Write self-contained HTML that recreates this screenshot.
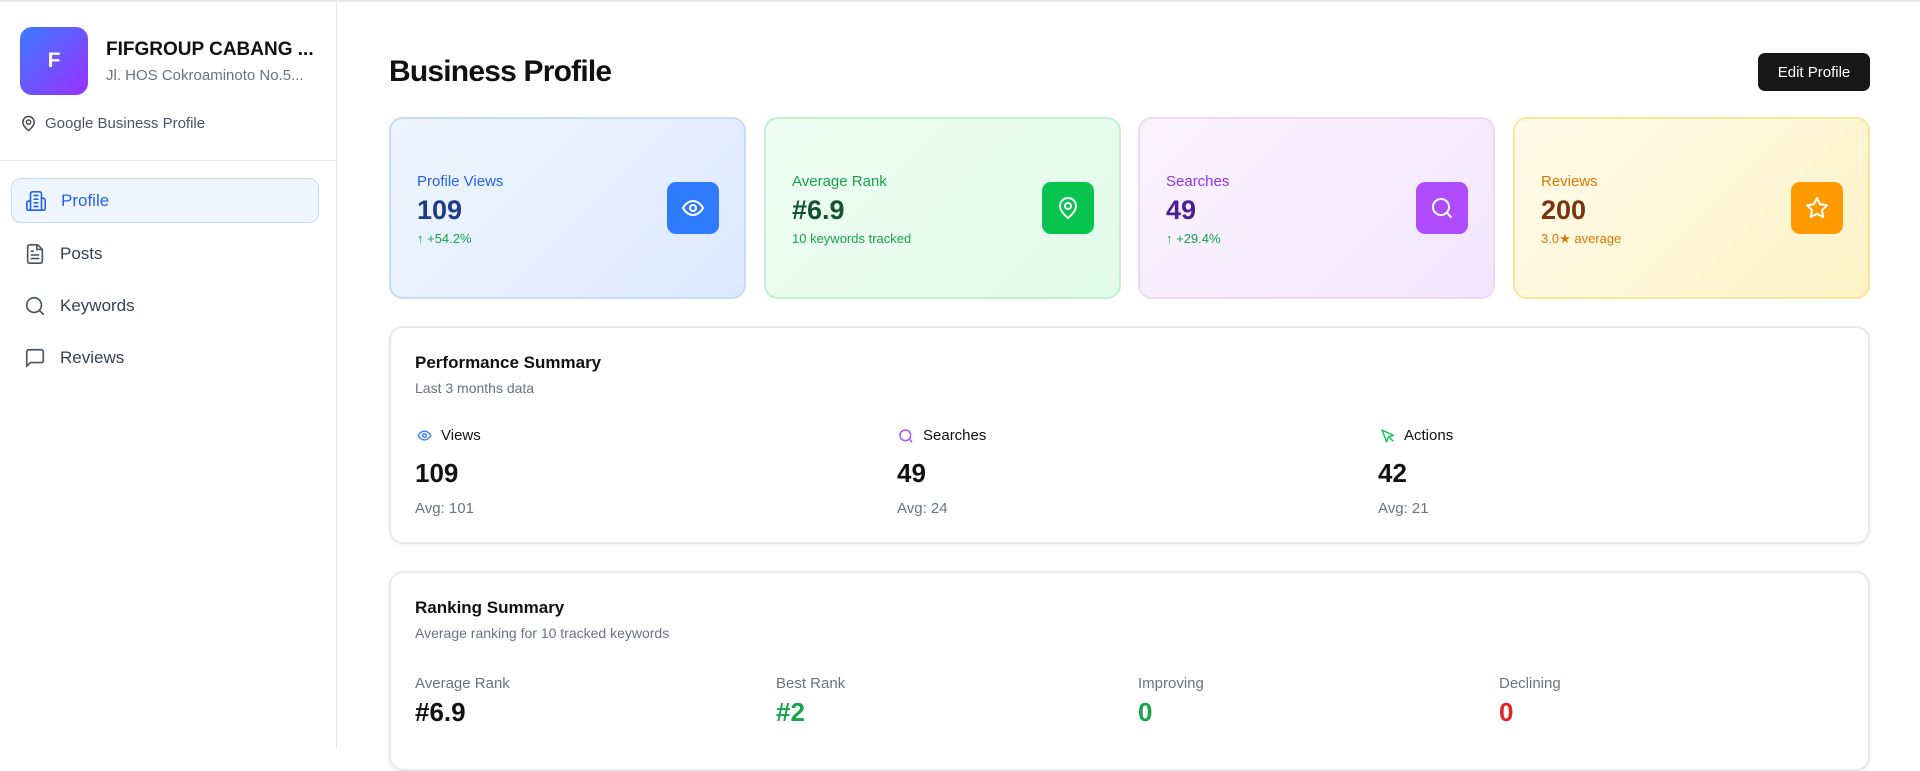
<!DOCTYPE html>
<html><head><meta charset="utf-8"><style>
*{box-sizing:border-box;margin:0;padding:0}
body{width:1920px;height:749px;overflow:hidden;background:#fff;font-family:"Liberation Sans",sans-serif;position:relative;color:#111}
.a{position:absolute;white-space:nowrap}
.side{position:absolute;left:0;top:0;width:337px;height:749px;border-right:1px solid #e5e7eb}
.top{position:absolute;left:0;top:0;width:1920px;height:2px;background:#e8e8e8}
.nav{position:absolute;left:11px;width:308px;height:45px;display:flex;align-items:center;padding-left:13px;font-size:17px;color:#374151}
.nav svg{width:22px;height:22px;margin-right:14px;fill:none;stroke:#4b5563;stroke-width:1.8;stroke-linecap:round;stroke-linejoin:round}
.card{position:absolute;top:117px;width:357px;height:182px;border-radius:14px;border:2px solid}
.card .l{position:absolute;left:26px;top:54px;font-size:15px}
.card .v{position:absolute;left:26px;top:76px;font-size:27px;font-weight:bold}
.card .s{position:absolute;left:26px;top:112px;font-size:13px}
.card .ic{position:absolute;left:276px;top:63px;width:52px;height:52px;border-radius:9px;display:flex;align-items:center;justify-content:center}
.card .ic svg{width:24px;height:24px;fill:none;stroke:#fff;stroke-width:2;stroke-linecap:round;stroke-linejoin:round}
.box{position:absolute;left:389px;width:1481px;border:2px solid #e8e8e8;border-radius:14px;box-shadow:0 2px 4px rgba(0,0,0,.05)}
.t{font-size:17px;font-weight:bold;color:#111}
.g{color:#6b7280}
</style></head><body>
<div class="top"></div>
<div class="side">
  <div class="a" style="left:20px;top:27px;width:68px;height:68px;border-radius:12px;background:linear-gradient(135deg,#3b7bff,#9b30ff);color:#fff;font-size:21px;font-weight:bold;display:flex;align-items:center;justify-content:center">F</div>
  <div class="a" style="left:106px;top:39px;font-size:19px;font-weight:bold;color:#111">FIFGROUP CABANG ...</div>
  <div class="a g" style="left:106px;top:67px;font-size:15px">Jl. HOS Cokroaminoto No.5...</div>
  <svg class="a" style="left:20px;top:115px" width="17" height="17" viewBox="0 0 24 24" fill="none" stroke="#374151" stroke-width="2"><path d="M20 10c0 6-8 12-8 12s-8-6-8-12a8 8 0 0 1 16 0z"/><circle cx="12" cy="10" r="3"/></svg>
  <div class="a" style="left:45px;top:115px;font-size:15px;color:#4b5563">Google Business Profile</div>
  <div class="a" style="left:0;top:160px;width:337px;height:1px;background:#e5e7eb"></div>
  <div class="nav" style="top:178px;background:#eff6ff;border:1.5px solid #bfdbfe;border-radius:10px;color:#2563eb"><svg style="stroke:#2563eb" viewBox="0 0 24 24"><path d="M6 22V4a2 2 0 0 1 2-2h8a2 2 0 0 1 2 2v18z"/><path d="M6 12H4a2 2 0 0 0-2 2v6a2 2 0 0 0 2 2h2M18 9h2a2 2 0 0 1 2 2v9a2 2 0 0 1-2 2h-2M10 6h4M10 10h4M10 14h4M10 18h4"/></svg>Profile</div>
  <div class="nav" style="top:231px"><svg viewBox="0 0 24 24"><path d="M15 2H6a2 2 0 0 0-2 2v16a2 2 0 0 0 2 2h12a2 2 0 0 0 2-2V7z"/><path d="M14 2v5h5M16 13H8M16 17H8M10 9H8"/></svg>Posts</div>
  <div class="nav" style="top:283px"><svg viewBox="0 0 24 24"><circle cx="11" cy="11" r="8"/><path d="m21 21-4.3-4.3"/></svg>Keywords</div>
  <div class="nav" style="top:335px"><svg viewBox="0 0 24 24"><path d="M21 15a2 2 0 0 1-2 2H7l-4 4V5a2 2 0 0 1 2-2h14a2 2 0 0 1 2 2z"/></svg>Reviews</div>
</div>

<div class="a" style="left:389px;top:55px;font-size:30px;font-weight:bold;letter-spacing:-0.8px">Business Profile</div>
<div class="a" style="left:1758px;top:53px;width:112px;height:38px;background:#171717;border-radius:7px;color:#fff;font-size:15px;display:flex;align-items:center;justify-content:center">Edit Profile</div>

<div class="card" style="left:389px;border-color:#c7dcfb;background:linear-gradient(135deg,#eef5ff,#dde9fd)">
  <div class="l" style="color:#2563eb">Profile Views</div><div class="v" style="color:#1e3a8a">109</div><div class="s" style="color:#16a34a">↑ +54.2%</div>
  <div class="ic" style="background:#2f7bff"><svg viewBox="0 0 24 24"><path d="M2 12s3.5-7 10-7 10 7 10 7-3.5 7-10 7S2 12 2 12z"/><circle cx="12" cy="12" r="3"/></svg></div></div>
<div class="card" style="left:764px;border-color:#bff0cf;background:linear-gradient(135deg,#effdf4,#e2fbe9)">
  <div class="l" style="color:#16a34a">Average Rank</div><div class="v" style="color:#14532d">#6.9</div><div class="s" style="color:#16a34a">10 keywords tracked</div>
  <div class="ic" style="background:#06c44e"><svg viewBox="0 0 24 24"><path d="M20 10c0 6-8 12-8 12s-8-6-8-12a8 8 0 0 1 16 0z"/><circle cx="12" cy="10" r="3"/></svg></div></div>
<div class="card" style="left:1138px;border-color:#ead7fd;background:linear-gradient(135deg,#faf3ff,#f1e6fe)">
  <div class="l" style="color:#9333ea">Searches</div><div class="v" style="color:#4c1d95">49</div><div class="s" style="color:#16a34a">↑ +29.4%</div>
  <div class="ic" style="background:#b04cff"><svg viewBox="0 0 24 24"><circle cx="11" cy="11" r="8"/><path d="m21 21-4.3-4.3"/></svg></div></div>
<div class="card" style="left:1513px;border-color:#fbe49a;background:linear-gradient(135deg,#fffbea,#fef3c7)">
  <div class="l" style="color:#d97706">Reviews</div><div class="v" style="color:#78350f">200</div><div class="s" style="color:#d97706">3.0★ average</div>
  <div class="ic" style="background:#fe9a00"><svg viewBox="0 0 24 24"><path d="M12 2l3.1 6.3 6.9 1-5 4.9 1.2 6.8L12 17.8 5.8 21l1.2-6.8-5-4.9 6.9-1z"/></svg></div></div>

<div class="box" style="top:326px;height:218px">
  <div class="a t" style="left:24px;top:25px">Performance Summary</div>
  <div class="a g" style="left:24px;top:52px;font-size:14px">Last 3 months data</div>
  <svg class="a" style="left:26px;top:100px" width="15" height="15" viewBox="0 0 24 24" fill="none" stroke="#2f7bff" stroke-width="2.2"><path d="M2 12s3.5-7 10-7 10 7 10 7-3.5 7-10 7S2 12 2 12z"/><circle cx="12" cy="12" r="3"/></svg>
  <div class="a" style="left:50px;top:99px;font-size:15px">Views</div>
  <div class="a" style="left:24px;top:130px;font-size:26px;font-weight:bold">109</div>
  <div class="a g" style="left:24px;top:172px;font-size:15px">Avg: 101</div>
  <svg class="a" style="left:507px;top:100px" width="16" height="16" viewBox="0 0 24 24" fill="none" stroke="#b04cff" stroke-width="2.2"><circle cx="11" cy="11" r="8"/><path d="m21 21-4.3-4.3"/></svg>
  <div class="a" style="left:532px;top:99px;font-size:15px">Searches</div>
  <div class="a" style="left:506px;top:130px;font-size:26px;font-weight:bold">49</div>
  <div class="a g" style="left:506px;top:172px;font-size:15px">Avg: 24</div>
  <svg class="a" style="left:989px;top:100px" width="16" height="16" viewBox="0 0 24 24" fill="none" stroke="#16c45a" stroke-width="2.2" stroke-linejoin="round"><path d="M3 3l7 18 2.5-7.5L20 11z"/><path d="M13 13l7 7"/></svg>
  <div class="a" style="left:1013px;top:99px;font-size:15px">Actions</div>
  <div class="a" style="left:987px;top:130px;font-size:26px;font-weight:bold">42</div>
  <div class="a g" style="left:987px;top:172px;font-size:15px">Avg: 21</div>
</div>

<div class="box" style="top:571px;height:200px">
  <div class="a t" style="left:24px;top:25px">Ranking Summary</div>
  <div class="a g" style="left:24px;top:52px;font-size:14px">Average ranking for 10 tracked keywords</div>
  <div class="a g" style="left:24px;top:102px;font-size:15px">Average Rank</div>
  <div class="a" style="left:24px;top:124px;font-size:26px;font-weight:bold">#6.9</div>
  <div class="a g" style="left:385px;top:102px;font-size:15px">Best Rank</div>
  <div class="a" style="left:385px;top:124px;font-size:26px;font-weight:bold;color:#16a34a">#2</div>
  <div class="a g" style="left:747px;top:102px;font-size:15px">Improving</div>
  <div class="a" style="left:747px;top:124px;font-size:26px;font-weight:bold;color:#16a34a">0</div>
  <div class="a g" style="left:1108px;top:102px;font-size:15px">Declining</div>
  <div class="a" style="left:1108px;top:124px;font-size:26px;font-weight:bold;color:#dc2626">0</div>
</div>
</body></html>
